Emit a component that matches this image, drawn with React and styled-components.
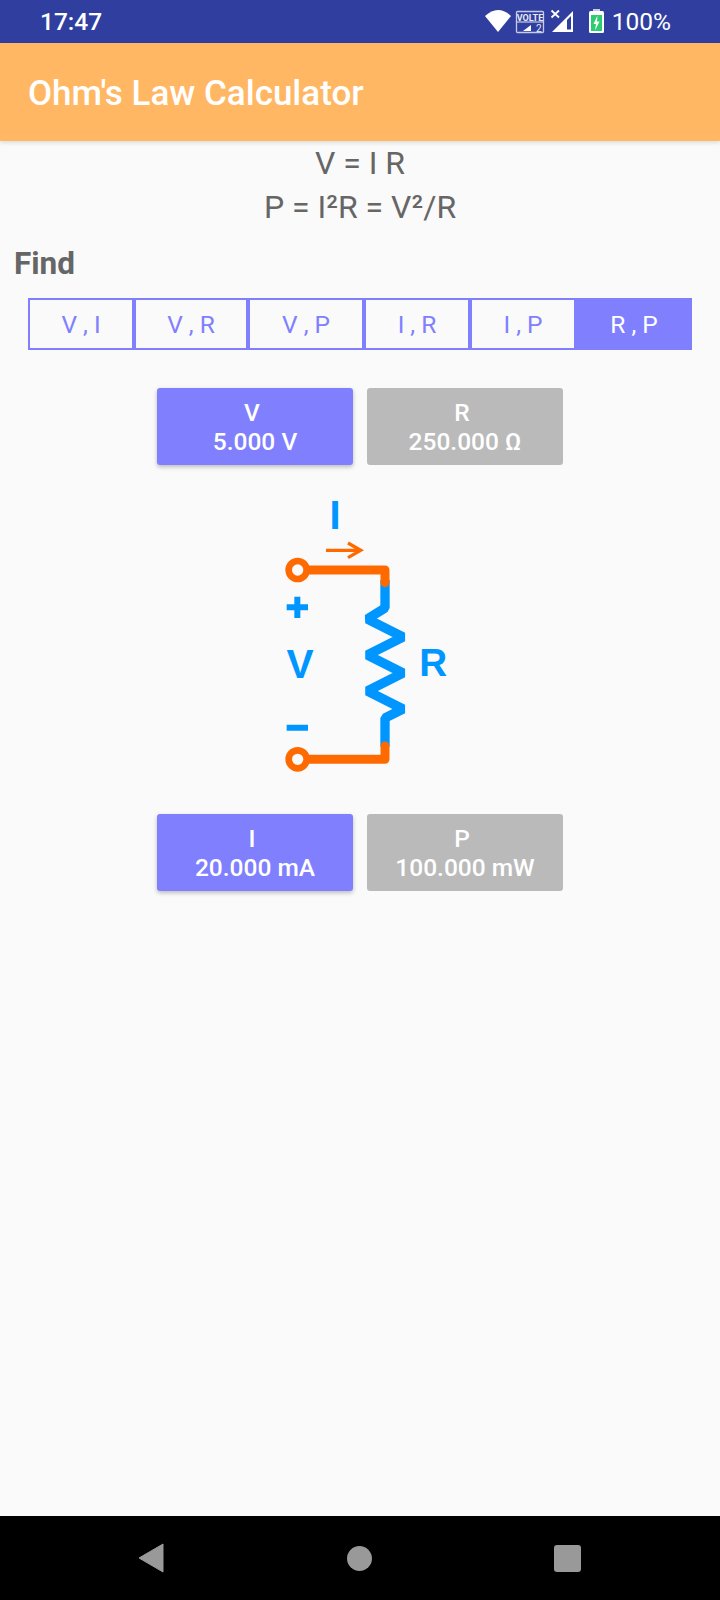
import React from 'react';
import styled, { createGlobalStyle } from 'styled-components';

const Global = createGlobalStyle`
  html, body { margin: 0; padding: 0; background: #fafafa; }
  * { box-sizing: border-box; }
`

const tabs = [
  { label: 'V , I', width: 106 },
  { label: 'V , R', width: 114 },
  { label: 'V , P', width: 116 },
  { label: 'I , R', width: 106 },
  { label: 'I , P', width: 106 },
  { label: 'R , P', width: 116, active: true },
];

function StatusIcons() {
  return (
    <svg width="122" height="43" viewBox="0 0 122 43">
      {/* wifi */}
      <path d="M0 16 Q13 4 26 16 L13 32 Z" fill="#fff" />
      {/* volte */}
      <rect x="31.5" y="11.5" width="27" height="21" rx="1" fill="none" stroke="#c5cae9" strokeWidth="1.3" />
      <path d="M32 22 H58" stroke="#c5cae9" strokeWidth="1.2" />
      <StatusText x="45" y="20.5" $size={9} $bold>VOLTE</StatusText>
      <path d="M38 31 L46 31 L46 25 Z" fill="#fff" />
      <StatusText x="51" y="31.5" $size={10}>2</StatusText>
      {/* signal */}
      <path d="M66.5 10.5 L74 17.5 M74 10.5 L66.5 17.5" stroke="#fff" strokeWidth="1.8" />
      <path d="M67 32 L88 32 L88 11 Z" fill="#fff" />
      <path d="M82 29.5 L86 29.5 L86 16 L82 20 Z" fill="#303f9f" />
      {/* battery */}
      <rect x="108" y="9" width="7" height="3" fill="#c5cae9" />
      <rect x="104" y="11" width="15" height="22" rx="1.5" fill="#fff" />
      <rect x="106" y="15" width="11" height="16" fill="#2ecc71" />
      <path d="M112.5 15.5 L108.5 24 L111 24 L110 30.5 L114.5 21.5 L112 21.5 Z" fill="#fff" />
    </svg>
  );
}

function Circuit() {
  return (
    <svg width="200" height="300" viewBox="0 0 600 900">
      <CircuitText x="225" y="148" $size={120}>I</CircuitText>
      <path d="M198 211 H298 M264 189 L302 211 L264 233" fill="none" stroke="#ff6a00" strokeWidth="10" />
      <path d="M375 300 V384 L322 417 L429 471 L322 525 L429 579 L322 633 L429 687 L375 714 V800" fill="none" stroke="#0096ff" strokeWidth="28" strokeLinejoin="bevel" />
      <circle cx="113" cy="270" r="27" fill="#fafafa" stroke="#ff6a00" strokeWidth="20" />
      <circle cx="113" cy="838" r="27" fill="#fafafa" stroke="#ff6a00" strokeWidth="20" />
      <path d="M148 270 H375 V308 M148 838 H375 V798" fill="none" stroke="#ff6a00" strokeWidth="27" strokeLinecap="round" strokeLinejoin="round" />
      <path d="M80 382 H144 M112 350 V414 M80 743 H144" stroke="#0096ff" strokeWidth="18" />
      <CircuitText x="120" y="595" $size={122}>V</CircuitText>
      <CircuitText x="520" y="587" $size={116}>R</CircuitText>
    </svg>
  );
}

export default function App() {
  return (
    <Page>
      <Global />
      <StatusBar>
        <Clock>17:47</Clock>
        <StatusRight>
          <StatusIcons />
          <Battery>100%</Battery>
        </StatusRight>
      </StatusBar>
      <Toolbar>Ohm's Law Calculator</Toolbar>
      <Main>
        <Formula>V = I R</Formula>
        <Formula>P = I²R = V²/R</Formula>
        <FindLabel>Find</FindLabel>
        <TabRow>
          {tabs.map((t) => (
            <Tab key={t.label} $w={t.width} $active={t.active}>{t.label}</Tab>
          ))}
        </TabRow>
        <ValueRow $top={38}>
          <ValueButton $active>{'V \n5.000 V'}</ValueButton>
          <ValueButton>{'R \n250.000 Ω'}</ValueButton>
        </ValueRow>
        <CircuitBox>
          <Circuit />
        </CircuitBox>
        <ValueRow>
          <ValueButton $active>{'I \n20.000 mA'}</ValueButton>
          <ValueButton>{'P \n100.000 mW'}</ValueButton>
        </ValueRow>
      </Main>
      <NavBar>
        <svg width="26" height="30" viewBox="0 0 26 30"><path d="M25 1 V29 L1 15 Z" fill="#999" stroke="#999" strokeWidth="1" strokeLinejoin="round" /></svg>
        <HomeDot />
        <RecentSquare />
      </NavBar>
    </Page>
  );
}

const Page = styled.div`
display: flex;
flex-direction: column;
width: 720px;
height: 1600px;
overflow: hidden;
background: #fafafa;
font-family: Roboto, sans-serif;
`

const StatusBar = styled.div`
display: flex;
justify-content: space-between;
align-items: center;
height: 43px;
padding: 0 49px 0 40px;
background: #303f9f;
color: white;
font-size: 24.5px;
`

const StatusText = styled.text`
font-family: Roboto, sans-serif;
font-size: ${(p) => p.$size}px;
font-weight: ${(p) => (p.$bold ? 700 : 400)};
text-anchor: ${(p) => (p.$bold ? 'middle' : 'start')};
fill: #e8eaf6;
`

const CircuitText = styled.text`
font-family: "Liberation Sans", Arial, sans-serif;
font-size: ${(p) => p.$size}px;
font-weight: 700;
text-anchor: middle;
fill: #0096ff;
`

const Clock = styled.span`
font-weight: 500;
`

const StatusRight = styled.div`
display: flex;
align-items: center;
`

const Battery = styled.span`
margin-left: 5px;
`

const Toolbar = styled.div`
position: relative;
display: flex;
align-items: center;
height: 98px;
padding: 2px 0 0 28px;
background: #ffb764;
color: white;
font-size: 35px;
font-weight: 500;
box-shadow: 0 2px 4px rgba(0, 0, 0, 0.12);
`

const Main = styled.div`
flex: 1;
display: flex;
flex-direction: column;
`

const Formula = styled.div`
height: 44px;
line-height: 44px;
text-align: center;
color: #666;
font-size: 32px;
`

const FindLabel = styled.div`
margin-top: 13px;
padding-left: 14px;
height: 44px;
line-height: 44px;
color: #666;
font-size: 31.5px;
font-weight: 700;
`

const TabRow = styled.div`
display: flex;
margin: 12px 0 0 28px;
`

const Tab = styled.div`
display: flex;
justify-content: center;
align-items: center;
width: ${(p) => p.$w}px;
height: 52px;
border: 2px solid #8080ff;
background: ${(p) => (p.$active ? '#8080ff' : 'transparent')};
color: ${(p) => (p.$active ? 'white' : '#8080ff')};
font-size: 24.5px;
white-space: pre;
`

const ValueRow = styled.div`
display: flex;
justify-content: center;
gap: 14px;
margin-top: ${(p) => p.$top || 0}px;
`

const ValueButton = styled.div`
width: 196px;
height: 77px;
padding-top: 10px;
border-radius: 3px;
background: ${(p) => (p.$active ? '#8080ff' : '#bababa')};
box-shadow: ${(p) => (p.$active ? '0 2px 4px rgba(0, 0, 0, 0.25)' : 'none')};
color: white;
font-size: 24.5px;
font-weight: 500;
line-height: 29px;
text-align: center;
white-space: pre;
`

const CircuitBox = styled.div`
display: flex;
justify-content: center;
height: 349px;
padding-top: 15px;
`

const NavBar = styled.div`
display: flex;
align-items: center;
height: 84px;
padding: 0 139px 0 138px;
justify-content: space-between;
background: black;
`

const HomeDot = styled.div`
width: 25px;
height: 25px;
border-radius: 50%;
background: #999;
`

const RecentSquare = styled.div`
width: 27px;
height: 27px;
border-radius: 3px;
background: #999;
`
